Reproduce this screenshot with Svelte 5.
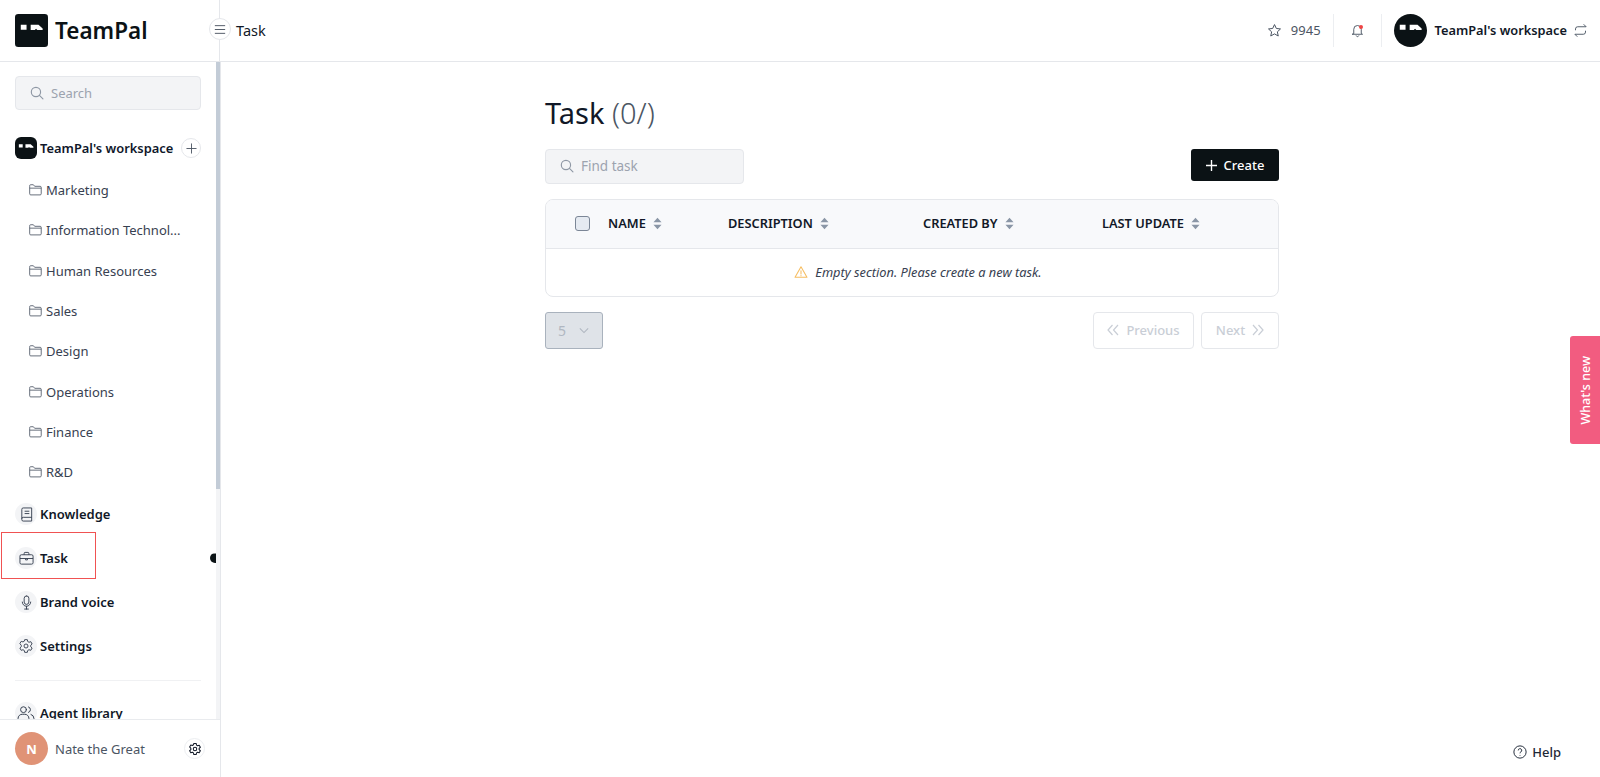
<script lang="ts">
  const folders = ['Marketing', 'Information Technol...', 'Human Resources', 'Sales', 'Design', 'Operations', 'Finance', 'R&D'];
  const columns = [
    { label: 'NAME', width: 120 },
    { label: 'DESCRIPTION', width: 195 },
    { label: 'CREATED BY', width: 179 },
    { label: 'LAST UPDATE', width: 150 }
  ];
</script>

{#snippet logoMark()}
  <path d="M7 13h7v6H7z M19 13h9.500l5 4.500v2h-6.500l-1.500-1.500-1.500 1.500H19z" fill="#fff" />
{/snippet}

{#snippet sortIcon()}
  <svg class="sort" viewBox="0 0 10 13" width="9" height="13"><path d="M5 0l4.500 5.200h-9z M5 13l4.500-5.200h-9z" fill="#8a96a6" /></svg>
{/snippet}

{#snippet searchIcon()}
  <svg viewBox="0 0 16 16" width="14" height="14" fill="none" stroke="#8f98a5" stroke-width="1.300"><circle cx="6.800" cy="6.800" r="5.300" /><path d="M10.800 10.800l4 4" stroke-linecap="round" /></svg>
{/snippet}

<div class="app">
  <header class="topbar">
    <div class="brand">
      <svg class="logo" viewBox="0 0 40 40" width="33" height="33"><rect width="40" height="40" rx="4" fill="#0b1215" />{@render logoMark()}</svg>
      <span class="brand-name">TeamPal</span>
    </div>
    <button class="toggle" aria-label="menu">
      <svg viewBox="0 0 14 12" width="12" height="11" fill="none" stroke="#4b5563" stroke-width="1.100"><path d="M1 1.500h12M1 6h12M1 10.500h12" /></svg>
    </button>
    <div class="crumb">Task</div>
    <div class="top-right">
      <svg viewBox="0 0 24 24" width="15" height="15" fill="none" stroke="#4b5563" stroke-width="1.600" stroke-linejoin="round"><path d="M12 2.500l2.900 6.200 6.700.8-5 4.600 1.400 6.700L12 17.400l-6 3.400 1.400-6.700-5-4.600 6.700-.8z" /></svg>
      <span class="count">9945</span>
      <span class="vr first"></span>
      <span class="bell">
        <svg viewBox="0 0 24 24" width="15" height="15" fill="none" stroke="#4b5563" stroke-width="1.500" stroke-linecap="round" stroke-linejoin="round"><path d="M6 16.500V10a6 6 0 0 1 12 0v6.500l2 1.500H4z M10 20.500a2.200 2.200 0 0 0 4 0" /></svg>
        <i class="bell-dot"></i>
      </span>
      <span class="vr second"></span>
      <svg class="ws-avatar" viewBox="0 0 40 40" width="33" height="33"><circle cx="20" cy="20" r="20" fill="#0b1215" />{@render logoMark()}</svg>
      <span class="ws-name">TeamPal's workspace</span>
      <svg viewBox="0 0 24 24" width="15" height="15" fill="none" stroke="#4b5563" stroke-width="1.500" stroke-linecap="round" stroke-linejoin="round"><path d="M4 11V9.500A3.500 3.500 0 0 1 7.500 6H21l-3.500-3.500 M20 13v1.500a3.500 3.500 0 0 1-3.500 3.500H3l3.500 3.500" /></svg>
    </div>
  </header>

  <div class="body">
    <aside class="sidebar">
      <div class="side-scroll">
        <div class="search side-search">
          {@render searchIcon()}
          <span>Search</span>
        </div>

        <div class="ws-row">
          <svg viewBox="0 0 40 40" width="22" height="22"><rect width="40" height="40" rx="11" fill="#0b1215" />{@render logoMark()}</svg>
          <span class="ws-label">TeamPal's workspace</span>
          <span class="ws-add">
            <svg viewBox="0 0 12 12" width="11" height="11" fill="none" stroke="#4b5563" stroke-width="1"><path d="M6 .5v11M.5 6h11" /></svg>
          </span>
        </div>

        <ul class="folders">
          {#each folders as folder}
            <li>
              <svg viewBox="0 0 14 13" width="13" height="12" fill="none" stroke="#5b6472" stroke-width="1"><path d="M.7 3V1.800a1 1 0 0 1 1-1h3l1.400 1.700h5.900a1.200 1.200 0 0 1 1.200 1.200v6.900a1.200 1.200 0 0 1-1.200 1.200H1.900a1.200 1.200 0 0 1-1.200-1.200z M.7 4.500h12.600" /></svg>
              <span>{folder}</span>
            </li>
          {/each}
        </ul>

        <nav class="nav">
          <div class="nav-item">
            <span class="nav-icon"><svg viewBox="0 0 16 16" width="15" height="15" fill="none" stroke="#374151" stroke-width="1"><path d="M3 2.500A1.500 1.500 0 0 1 4.500 1H13.500v14H4.500A1.500 1.500 0 0 1 3 13.500z M3 12.500A1.500 1.500 0 0 1 4.500 11h9 M6 4.500h5M6 7h5" /></svg></span>
            <span>Knowledge</span>
          </div>
          <div class="nav-item">
            <span class="nav-icon"><svg viewBox="0 0 16 16" width="15" height="15" fill="none" stroke="#374151" stroke-width="1"><rect x="1" y="4" width="14" height="10" rx="1.500" /><path d="M5.500 4V2.500a1 1 0 0 1 1-1h3a1 1 0 0 1 1 1V4 M1 8h14 M7 8v1.500h2V8" /></svg></span>
            <span>Task</span>
            <i class="active-dot"></i>
          </div>
          <div class="nav-item">
            <span class="nav-icon"><svg viewBox="0 0 16 16" width="15" height="15" fill="none" stroke="#374151" stroke-width="1" stroke-linecap="round"><rect x="5.500" y="1" width="5" height="9" rx="2.500" /><path d="M3.500 7.500a4.500 4.500 0 0 0 9 0 M8 12v3 M6 15h4" /></svg></span>
            <span>Brand voice</span>
          </div>
          <div class="nav-item">
            <span class="nav-icon"><svg viewBox="0 0 24 24" width="16" height="16" fill="none" stroke="#374151" stroke-width="1.400" stroke-linejoin="round"><path d="M10 2.500h4l.6 2.800 1.900 1.100 2.700-.9 2 3.500-2.100 1.900v2.200l2.100 1.900-2 3.500-2.700-.9-1.900 1.100-.6 2.800h-4l-.6-2.800-1.900-1.100-2.700.9-2-3.500 2.100-1.900v-2.200L2.800 8.500l2-3.500 2.700.9 1.900-1.100z" /><circle cx="12" cy="12" r="3" /></svg></span>
            <span>Settings</span>
          </div>
          <hr />
          <div class="nav-item">
            <span class="nav-icon"><svg viewBox="0 0 24 24" width="20" height="20" fill="none" stroke="#374151" stroke-width="1.200" stroke-linecap="round"><circle cx="9" cy="8" r="3.500" /><path d="M2.500 20v-1.500a5 5 0 0 1 5-5h3a5 5 0 0 1 5 5V20 M15 4.700a3.500 3.500 0 0 1 0 6.600 M18 13.700a5 5 0 0 1 3.500 4.800V20" /></svg></span>
            <span>Agent library</span>
          </div>
        </nav>
      </div>

      <div class="scrollbar"><div class="thumb"></div></div>

      <div class="user">
        <span class="avatar">N</span>
        <span class="user-name">Nate the Great</span>
        <span class="user-gear">
          <svg viewBox="0 0 24 24" width="14" height="14" fill="none" stroke="#111827" stroke-width="1.800" stroke-linejoin="round"><path d="M10 2.500h4l.6 2.800 1.900 1.100 2.700-.9 2 3.500-2.100 1.900v2.200l2.100 1.900-2 3.500-2.700-.9-1.900 1.100-.6 2.800h-4l-.6-2.800-1.900-1.100-2.700.9-2-3.500 2.100-1.900v-2.200L2.800 8.500l2-3.500 2.700.9 1.900-1.100z" /><circle cx="12" cy="12" r="3" /></svg>
        </span>
      </div>

      <div class="highlight"></div>
    </aside>

    <main class="main">
      <div class="content">
        <h1>Task <span>(0/)</span></h1>

        <div class="toolbar">
          <div class="search task-search">
            {@render searchIcon()}
            <span>Find task</span>
          </div>
          <button class="create">
            <svg viewBox="0 0 12 12" width="11" height="11" fill="none" stroke="#fff" stroke-width="1.500"><path d="M6 0v12M0 6h12" /></svg>
            Create
          </button>
        </div>

        <div class="table">
          <div class="thead">
            <span class="check"></span>
            {#each columns as col}
              <div class="th" style="width: {col.width}px">
                <span>{col.label}</span>
                {@render sortIcon()}
              </div>
            {/each}
          </div>
          <div class="empty">
            <svg viewBox="0 0 24 24" width="14" height="14" fill="none" stroke="#f6bd60" stroke-width="1.800" stroke-linejoin="round" stroke-linecap="round"><path d="M12 3L1.800 21h20.400z M12 10v5.500 M12 18.200v.1" /></svg>
            <em>Empty section. Please create a new task.</em>
          </div>
        </div>

        <div class="pager">
          <div class="page-size">
            <span>5</span>
            <svg viewBox="0 0 12 8" width="10" height="7" fill="none" stroke="#b0b7c1" stroke-width="1.300"><path d="M1 1.500l5 5 5-5" /></svg>
          </div>
          <div class="page-btns">
            <button class="page-btn prev">
              <svg viewBox="0 0 12 12" width="12" height="12" fill="none" stroke="#c9ced6" stroke-width="1.200"><path d="M5.500 1L1 6l4.500 5M11 1L6.500 6l4.500 5" /></svg>
              Previous
            </button>
            <button class="page-btn next">
              Next
              <svg viewBox="0 0 12 12" width="12" height="12" fill="none" stroke="#c9ced6" stroke-width="1.200"><path d="M1 1l4.500 5L1 11M6.500 1L11 6l-4.500 5" /></svg>
            </button>
          </div>
        </div>
      </div>
    </main>
  </div>

  <div class="whats-new"><span>What's new</span></div>

  <div class="help">
    <svg viewBox="0 0 16 16" width="14" height="14" fill="none" stroke="#1f2937" stroke-width="1.100"><circle cx="8" cy="8" r="7" /><path d="M6 6.200a2 2 0 1 1 3 1.700c-.7.400-1 .8-1 1.600 M8 11.400v.8" /></svg>
    <span>Help</span>
  </div>
</div>

<style>
  :global(body) {
    margin: 0;
    background: #fff;
    font-family: "Noto Sans", "Open Sans", sans-serif;
    color: #111827;
    overflow: hidden;
  }

  .app {
    height: 100vh;
    display: flex;
    flex-direction: column;
    position: relative;
  }

  button {
    font-family: inherit;
  }

  .topbar {
    height: 61px;
    flex-shrink: 0;
    display: flex;
    align-items: center;
    border-bottom: 1px solid #e5e7eb;
    position: relative;
  }

  .brand {
    width: 220px;
    box-sizing: border-box;
    height: 100%;
    padding-left: 15px;
    display: flex;
    align-items: center;
    gap: 7px;
    border-right: 1px solid #e5e7eb;
    flex-shrink: 0;
  }

  .brand-name {
    font-size: 22.500px;
    font-weight: 600;
    color: #0b1215;
    padding-bottom: 1px;
  }

  .toggle {
    position: absolute;
    left: 209px;
    top: 18px;
    width: 22px;
    height: 22px;
    padding: 0;
    border: 1px solid #e5e7eb;
    border-radius: 50%;
    background: #fff;
    display: flex;
    align-items: center;
    justify-content: center;
  }

  .crumb {
    margin-left: 16px;
    font-size: 14.500px;
    color: #111827;
    padding-bottom: 1px;
  }

  .top-right {
    margin-left: auto;
    display: flex;
    align-items: center;
    padding-right: 12px;
    font-size: 13px;
  }

  .count {
    margin-left: 9px;
    color: #4b5563;
    padding-bottom: 2px;
  }

  .vr {
    width: 1px;
    height: 33px;
    background: #eceef1;
  }

  .vr.first {
    margin: 0 16px 0 12px;
  }

  .vr.second {
    margin: 0 12px 0 16px;
  }

  .bell {
    position: relative;
    display: flex;
  }

  .bell-dot {
    position: absolute;
    right: 2px;
    top: 2px;
    width: 4px;
    height: 4px;
    border-radius: 50%;
    background: #ef4444;
  }

  .ws-name {
    margin: 0 6px 0 8px;
    font-size: 12.800px;
    font-weight: 600;
    color: #111827;
    padding-bottom: 2px;
  }

  .body {
    flex: 1;
    min-height: 0;
    display: flex;
  }

  .sidebar {
    width: 221px;
    flex-shrink: 0;
    box-sizing: border-box;
    border-right: 1px solid #e5e7eb;
    display: flex;
    flex-direction: column;
    position: relative;
  }

  .side-scroll {
    flex: 1;
    min-height: 0;
    overflow: hidden;
    padding: 14px 19px 0 15px;
  }

  .scrollbar {
    position: absolute;
    top: 0;
    right: 0;
    bottom: 58px;
    width: 4px;
    background: #f3f4f6;
  }

  .thumb {
    height: 427px;
    background: #c3ccd7;
  }

  .search {
    display: flex;
    align-items: center;
    gap: 7px;
    height: 35px;
    box-sizing: border-box;
    padding: 0 0 1px 14px;
    background: #f3f4f6;
    border: 1px solid #e5e7eb;
    border-radius: 4px;
    font-size: 13.500px;
    color: #9ca3af;
  }

  .side-search {
    height: 34px;
    font-size: 13px;
  }

  .ws-row {
    display: flex;
    align-items: center;
    margin-top: 27px;
    height: 22px;
  }

  .ws-label {
    margin-left: 3px;
    padding-bottom: 1px;
    font-size: 12.900px;
    font-weight: 600;
    color: #0f172a;
    white-space: nowrap;
  }

  .ws-add {
    margin-left: auto;
    width: 20px;
    height: 20px;
    box-sizing: border-box;
    border: 1px solid #e5e7eb;
    border-radius: 50%;
    display: flex;
    align-items: center;
    justify-content: center;
  }

  .folders {
    list-style: none;
    margin: 11px 0 0;
    padding: 0 0 0 14px;
  }

  .folders li {
    height: 40.300px;
    display: flex;
    align-items: center;
    gap: 4px;
    font-size: 13px;
    color: #374151;
    white-space: nowrap;
  }

  .nav-item {
    height: 44px;
    display: flex;
    align-items: center;
    gap: 3px;
    font-size: 13px;
    font-weight: 600;
    color: #111827;
    position: relative;
  }

  .nav-icon {
    width: 22px;
    height: 22px;
    border-radius: 50%;
    background: #f3f4f6;
    display: flex;
    align-items: center;
    justify-content: center;
  }

  .active-dot {
    position: absolute;
    right: -19px;
    top: 17px;
    width: 10px;
    height: 10px;
    border-radius: 50%;
    background: #0b1215;
    clip-path: inset(0 4px 0 0);
  }

  hr {
    border: 0;
    border-top: 1px solid #f0f1f3;
    margin: 12px 0 10px;
  }

  .user {
    height: 58px;
    flex-shrink: 0;
    box-sizing: border-box;
    border-top: 1px solid #e9ebee;
    background: #fff;
    padding: 0 15px;
    display: flex;
    align-items: center;
    font-size: 13px;
    color: #4b5563;
  }

  .avatar {
    width: 33px;
    height: 33px;
    border-radius: 50%;
    background: #e09376;
    color: #fff;
    font-weight: 700;
    font-size: 13px;
    display: flex;
    align-items: center;
    justify-content: center;
    margin-right: 7px;
  }

  .user-gear {
    margin-left: auto;
    width: 21px;
    height: 21px;
    box-sizing: border-box;
    border: 1px solid #eceef1;
    border-radius: 50%;
    display: flex;
    align-items: center;
    justify-content: center;
  }

  .highlight {
    position: absolute;
    left: 1px;
    top: 470px;
    width: 93px;
    height: 45px;
    border: 1px solid #f05252;
  }

  .main {
    flex: 1;
    min-width: 0;
    display: flex;
    justify-content: center;
    padding-left: 3px;
    box-sizing: border-box;
  }

  .content {
    width: 734px;
    padding-top: 29px;
  }

  h1 {
    margin: 0;
    font-size: 29px;
    line-height: 44px;
    font-weight: 400;
    color: #111827;
  }

  h1 span {
    color: #4b5563;
    font-weight: 300;
  }

  .toolbar {
    margin-top: 14px;
    display: flex;
    justify-content: space-between;
    align-items: flex-start;
  }

  .task-search {
    width: 199px;
  }

  .create {
    width: 88px;
    height: 32px;
    border: 0;
    border-radius: 3px;
    background: #0b1215;
    color: #fff;
    font-size: 13px;
    font-weight: 500;
    display: flex;
    align-items: center;
    justify-content: center;
    gap: 7px;
    padding: 0;
  }

  .table {
    margin-top: 15px;
    border: 1px solid #e5e7eb;
    border-radius: 8px;
    overflow: hidden;
  }

  .thead {
    height: 49px;
    box-sizing: border-box;
    background: #f8f9fb;
    border-bottom: 1px solid #e5e7eb;
    display: flex;
    align-items: center;
    padding: 0 0 2px 29px;
  }

  .check {
    width: 13px;
    height: 13px;
    border: 1px solid #7b8696;
    border-radius: 3px;
    background: #e5eaf1;
    margin-right: 18px;
    flex-shrink: 0;
  }

  .th {
    display: flex;
    align-items: center;
    gap: 7px;
    font-size: 12.800px;
    font-weight: 600;
    color: #111827;
    white-space: nowrap;
  }

  .empty {
    height: 47px;
    box-sizing: border-box;
    display: flex;
    align-items: center;
    justify-content: center;
    gap: 7px;
    padding: 0 0 2px 12px;
    font-size: 12.800px;
    color: #374151;
  }

  .pager {
    margin-top: 15px;
    display: flex;
    justify-content: space-between;
    align-items: center;
  }

  .page-size {
    width: 58px;
    height: 37px;
    box-sizing: border-box;
    background: #dfe3e8;
    border: 1px solid #a9b2bd;
    border-radius: 3px;
    display: flex;
    align-items: center;
    gap: 13px;
    padding: 0 0 1px 12px;
    font-size: 14px;
    color: #b0b7c1;
  }

  .page-btns {
    display: flex;
    gap: 7px;
  }

  .page-btn {
    height: 37px;
    background: #fff;
    border: 1px solid #e5e7eb;
    border-radius: 4px;
    color: #c9ced6;
    font-size: 13px;
    font-weight: 500;
    display: flex;
    align-items: center;
    justify-content: center;
    gap: 7px;
    padding: 0 0 1px;
  }

  .prev {
    width: 101px;
  }

  .next {
    width: 78px;
  }

  .whats-new {
    position: absolute;
    right: 0;
    top: 336px;
    width: 30px;
    height: 108px;
    background: #f25c80;
    border-radius: 3px 0 0 3px;
    color: #fff;
    font-size: 12.500px;
    font-weight: 500;
    display: flex;
    align-items: center;
    justify-content: center;
  }

  .whats-new span {
    writing-mode: vertical-rl;
    transform: rotate(180deg);
    white-space: nowrap;
  }

  .help {
    position: absolute;
    right: 39px;
    top: 743px;
    display: flex;
    align-items: center;
    gap: 5px;
    font-size: 13px;
    font-weight: 500;
    color: #1f2937;
  }
</style>
